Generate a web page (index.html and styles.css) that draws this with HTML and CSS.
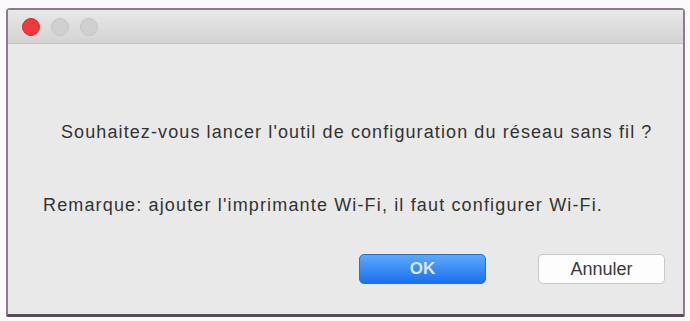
FILE: index.html
```html
<!DOCTYPE html>
<html lang="fr">

<head>
    <meta charset="UTF-8">
    <meta name="viewport" content="width=device-width, initial-scale=1.0">
    <title>Configuration sans fil</title>
    <link rel="stylesheet" href="styles.css">
</head>

<body>
    <div class="window">
        <div class="title-bar">
            <span class="light light-close"></span>
            <span class="light"></span>
            <span class="light"></span>
        </div>

        <div class="content">
            <p class="question">Souhaitez-vous lancer l'outil de configuration du réseau sans fil ?</p>
            <p class="note">Remarque: ajouter l'imprimante Wi-Fi, il faut configurer Wi-Fi.</p>

            <div class="buttons-container">
                <button class="ok-button">OK</button>
                <button class="cancel-button">Annuler</button>
            </div>
        </div>
    </div>
</body>

</html>
```

FILE: styles.css
```css
body {
    margin: 0;
    background-color: #fbfafb;
    font-family: "Liberation Sans", Arial, sans-serif;
}

.window {
    margin: 8px 5px 2px 6px;
    height: 309px;
    border: 2px solid #8e7b92;
    border-bottom: 3px solid #5a4a5e;
    border-radius: 4px 4px 2px 2px;
    background-color: #e9e9e9;
    display: flex;
    flex-direction: column;
    box-sizing: border-box;
}

.title-bar {
    height: 33px;
    display: flex;
    align-items: center;
    gap: 11px;
    padding-left: 14px;
    background: linear-gradient(#e8e8e8, #d3d3d3);
    border-bottom: 1px solid #c3c3c3;
}

.light {
    width: 18px;
    height: 18px;
    border-radius: 50%;
    background-color: #d0d0d0;
    border: 1px solid #c4c4c4;
    box-sizing: border-box;
}

.light-close {
    background-color: #f2383c;
    border-color: #d4282e;
}

.content {
    flex: 1;
    display: flex;
    flex-direction: column;
}

.question {
    margin: 78px 0 0 53px;
    font-size: 18px;
    letter-spacing: 1.1px;
    color: #333;
}

.note {
    margin: 52px 0 0 35px;
    font-size: 18px;
    letter-spacing: 1.15px;
    color: #333;
}

.buttons-container {
    display: flex;
    gap: 52px;
    margin: 38px 0 0 351px;
}

.ok-button,
.cancel-button {
    width: 127px;
    height: 30px;
    border-radius: 5px;
    font-family: "Liberation Sans", Arial, sans-serif;
    font-size: 17px;
}

.ok-button {
    background: linear-gradient(#5ca9fb, #1c6ff0);
    border: 1px solid #2a6fd8;
    color: #d8e9ff;
    font-weight: bold;
}

.cancel-button {
    background-color: #fdfdfd;
    border: 1px solid #c8c8c8;
    color: #3a3a3a;
    font-size: 18px;
}
```
